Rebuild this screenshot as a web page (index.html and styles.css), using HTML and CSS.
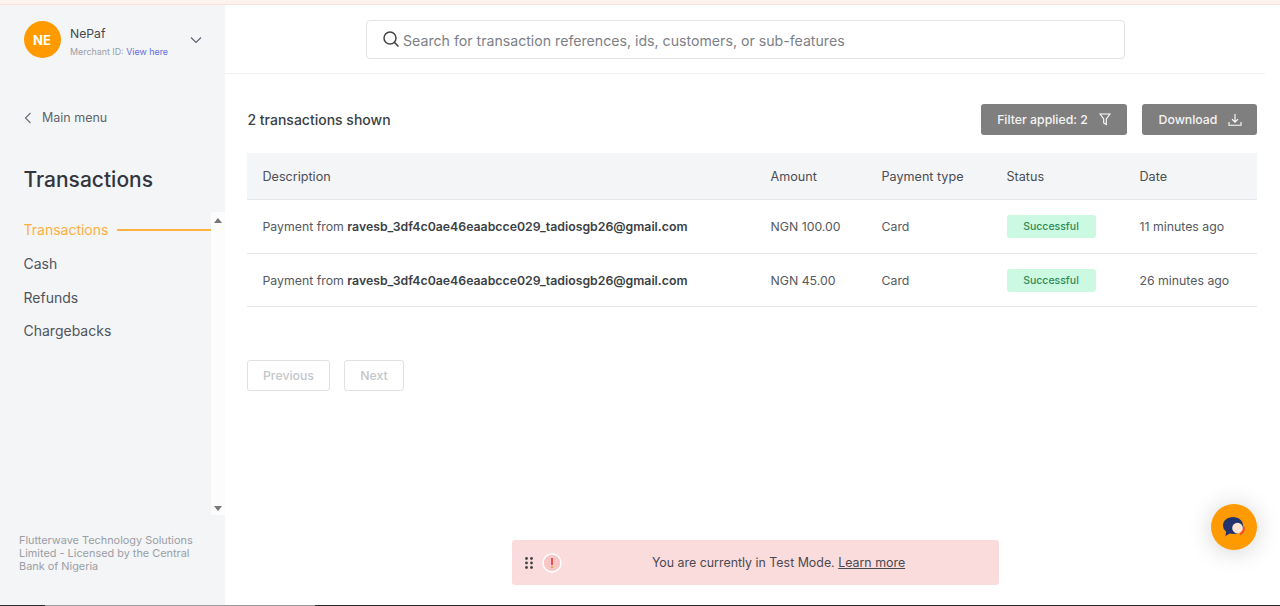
FILE: index.html
```html
<!DOCTYPE html>
<html lang="en">
<head>
<meta charset="utf-8">
<title>Transactions</title>
<link rel="stylesheet" href="styles.css">
</head>
<body>
<div class="topstrip"></div>
<div class="app">
  <aside class="sidebar">
    <div class="account">
      <div class="avatar">NE</div>
      <div class="account-text">
        <div class="account-name">NePaf</div>
        <div class="account-id">Merchant ID: <a class="link">View here</a></div>
      </div>
      <svg class="chev" width="12" height="8" viewBox="0 0 12 8"><path d="M1 1.5l5 5 5-5" fill="none" stroke="#5f6670" stroke-width="1.2"/></svg>
    </div>
    <div class="back">
      <svg width="8" height="12" viewBox="0 0 8 12"><path d="M6.5 1L1.5 6l5 5" fill="none" stroke="#6b7178" stroke-width="1.2"/></svg>
      <span>Main menu</span>
    </div>
    <h1 class="section-title">Transactions</h1>
    <div class="navwrap">
      <nav class="nav">
        <a class="nav-item active"><span>Transactions</span><i class="nav-line"></i></a>
        <a class="nav-item">Cash</a>
        <a class="nav-item">Refunds</a>
        <a class="nav-item">Chargebacks</a>
      </nav>
      <div class="scrollbar">
        <i class="arrow up"></i>
        <i class="arrow down"></i>
      </div>
    </div>
    <p class="legal">Flutterwave Technology Solutions Limited - Licensed by the Central Bank of Nigeria</p>
  </aside>
  <main class="main">
    <header class="searchbar">
      <div class="search">
        <svg width="18" height="18" viewBox="0 0 18 18"><circle cx="8" cy="8" r="6" fill="none" stroke="#444" stroke-width="1.5"/><path d="M12.4 12.4L16.5 16.5" stroke="#444" stroke-width="1.5"/></svg>
        <span>Search for transaction references, ids, customers, or sub-features</span>
      </div>
    </header>
    <section class="content">
      <div class="toolbar">
        <div class="count">2 transactions shown</div>
        <div class="actions">
          <button class="btn btn-filter">Filter applied: 2
            <svg width="12" height="13" viewBox="0 0 12 13"><path d="M1 1h10L7.300 6v5.500L4.700 10V6z" fill="none" stroke="#fff" stroke-width="1.1"/></svg>
          </button>
          <button class="btn btn-download">Download
            <svg width="14" height="14" viewBox="0 0 14 14"><path d="M7 1v8M4 6.200L7 9.200l3-3M1 9v3.200h12V9" fill="none" stroke="#fff" stroke-width="1.1"/></svg>
          </button>
        </div>
      </div>
      <table class="table">
        <colgroup><col class="c1"><col class="c2"><col class="c3"><col class="c4"><col class="c5"></colgroup>
        <thead>
          <tr><th>Description</th><th>Amount</th><th>Payment type</th><th>Status</th><th>Date</th></tr>
        </thead>
        <tbody>
          <tr>
            <td>Payment from <b>ravesb_3df4c0ae46eaabcce029_tadiosgb26@gmail.com</b></td>
            <td>NGN 100.00</td><td>Card</td><td><span class="badge">Successful</span></td><td>11 minutes ago</td>
          </tr>
          <tr>
            <td>Payment from <b>ravesb_3df4c0ae46eaabcce029_tadiosgb26@gmail.com</b></td>
            <td>NGN 45.00</td><td>Card</td><td><span class="badge">Successful</span></td><td>26 minutes ago</td>
          </tr>
        </tbody>
      </table>
      <div class="pager">
        <button class="page-btn btn-prev">Previous</button>
        <button class="page-btn btn-next">Next</button>
      </div>
    </section>
  </main>
</div>
<div class="bottomline"></div>
<div class="toast">
  <svg class="grip" width="8" height="12" viewBox="0 0 8 12"><g fill="#444"><circle cx="1.5" cy="1.5" r="1.4"/><circle cx="6.5" cy="1.5" r="1.4"/><circle cx="1.5" cy="6" r="1.4"/><circle cx="6.5" cy="6" r="1.4"/><circle cx="1.5" cy="10.5" r="1.4"/><circle cx="6.5" cy="10.5" r="1.4"/></g></svg>
  <svg class="alert" width="20" height="20" viewBox="0 0 20 20"><circle cx="10" cy="10" r="9" fill="#f9c6c8" stroke="#fff" stroke-width="1.4"/><rect x="9.200" y="5" width="1.600" height="7" fill="#e5343a"/><rect x="9.200" y="13" width="1.600" height="2" fill="#e0a030"/></svg>
  <div class="toast-text">You are currently in Test Mode. <a class="toast-link">Learn more</a></div>
</div>
<div class="chat">
  <svg width="23" height="20" viewBox="0 0 23 20"><path d="M16 8c2.500 0 6 .5 6 3.500 0 3-2.500 6-5.500 7.500 1-2 1-4-.5-6z" fill="#f0532a"/><path d="M10 0c5.500 0 10 3.500 10 8.500S15.500 17 10 17c-1.200 0-2.300-.2-3.300-.5L2.500 19l.6-4.500C1.200 13 0 11 0 8.500 0 3.500 4.500 0 10 0z" fill="#22346e"/><circle cx="14.500" cy="11" r="5.300" fill="#fde5d5"/></svg>
</div>
</body>
</html>
```

FILE: styles.css
```css
* { box-sizing: border-box; }
html, body { margin: 0; height: 100%; }
body {
  width: 1280px;
  height: 606px;
  overflow: hidden;
  position: relative;
  display: flex;
  flex-direction: column;
  background: #fff;
  font-family: "Inter", "Liberation Sans", sans-serif;
  color: #3d4148;
}
.topstrip { height: 5px; flex: none; background: #fdf2ee; border-bottom: 1px solid #fbe3dc; }
.bottomline {
  height: 1px; flex: none;
  background: linear-gradient(to right, #2b2b2b 0 45px, #9a9a9a 45px 315px, #2b2b2b 315px);
}
.app { flex: 1; display: flex; min-height: 0; }

.sidebar {
  width: 225px; flex: none;
  background: #f4f5f7;
  display: flex; flex-direction: column;
}
.account { display: flex; align-items: center; padding: 16px 23px 0 23.5px; height: 53px; }
.avatar {
  width: 37px; height: 37px; border-radius: 50%;
  background: #ff9b00; color: #fff;
  font-size: 13px; font-weight: 700;
  display: flex; align-items: center; justify-content: center;
  flex: none;
}
.account-text { margin: 5px 0 0 9.5px; flex: 1; }
.account-name { font-size: 12.2px; line-height: 16px; color: #44484f; }
.account-id { font-size: 8.9px; line-height: 13px; margin-top: 3px; color: #9a9ea5; white-space: nowrap; }
.link { color: #5f6fe0; }
.chev { flex: none; }
.back {
  display: flex; align-items: center; gap: 10.5px;
  margin-top: 52px; padding-left: 23.5px;
  font-size: 12.5px; line-height: 16px; color: #5f656d;
}
.section-title {
  margin: 40px 0 0 23.5px;
  font-size: 21px; line-height: 28px; font-weight: 500; color: #33363d;
}
.navwrap { display: flex; flex: 1; margin-top: 18px; min-height: 0; }
.nav { flex: 1; padding-top: 1px; }
.nav-item {
  display: flex; align-items: center; gap: 9px;
  height: 33.7px; padding-left: 23.5px;
  font-size: 14px; color: #4f545c;
}
.nav-item.active { color: #ffae3d; }
.nav-line { flex: 1; height: 1.5px; background: #ffb23f; }
.scrollbar {
  width: 14px; flex: none;
  background: #fcfcfd;
  position: relative;
}
.arrow { position: absolute; left: 3px; width: 0; height: 0; border-left: 4.5px solid transparent; border-right: 4.5px solid transparent; }
.arrow.up { top: 6px; border-bottom: 5px solid #777; }
.arrow.down { bottom: 4px; border-top: 5px solid #777; }
.legal {
  margin: 19px 30px 32px 19px;
  font-size: 10.9px; line-height: 13px; color: #9a9ea5;
}

.main { flex: 1; min-width: 0; display: flex; flex-direction: column; }
.searchbar {
  height: 69px; flex: none;
  margin-right: 15px;
  border-bottom: 1px solid #f0f1f3;
  padding: 15px 140px 0 141px;
}
.search {
  height: 39px; display: flex; align-items: center; gap: 3px;
  padding: 2px 0 0 15px;
  border: 1px solid #e1e3e6; border-radius: 4px;
  font-size: 14.15px; color: #7d8187;
}
.search svg { margin-top: -3px; }
.content { padding: 0 23px 0 22px; }
.toolbar { display: flex; align-items: center; justify-content: space-between; height: 79px; padding-top: 12px; }
.count { margin-left: .5px; font-size: 14px; font-weight: 500; color: #3b3f46; }
.actions { display: flex; gap: 15px; }
.btn {
  height: 31px;
  display: flex; align-items: center; justify-content: center; gap: 11px;
  background: #7f7f7f; color: #f4f4f4;
  border: 0; border-radius: 3px;
  font: 500 12.3px "Inter", "Liberation Sans", sans-serif;
}
.btn-filter { width: 146px; }
.btn-download { width: 115px; padding: 0 5px 0 7px; }
.table { width: 1010px; border-collapse: collapse; table-layout: fixed; font-size: 12.3px; }
.c1 { width: 508px; }
.c2 { width: 111px; }
.c3 { width: 125px; }
.c4 { width: 133px; }
th {
  height: 46px; padding: 1px 0 0 15.5px;
  text-align: left; font-weight: 400; font-size: 12.6px; color: #4a4e55;
  background: #f4f5f7;
}
td {
  height: 54px; padding: 0 0 0 15.5px;
  border-top: 1px solid #e6e7ea;
  color: #555a61; white-space: nowrap;
}
tbody tr:last-child td { border-bottom: 1px solid #e6e7ea; height: 53px; padding-top: 1px; }
td b { font-size: 12.3px; font-weight: 600; color: #3b3f46; }
.badge {
  display: inline-block; width: 89px; height: 23px;
  line-height: 23px; text-align: center;
  background: #ccf9e2; color: #2f8a58;
  font-size: 10.5px; font-weight: 500; border-radius: 3px;
}
.pager { display: flex; gap: 14px; margin-top: 53px; }
.page-btn {
  height: 31px;
  background: #fff; color: #c4c7cb;
  border: 1px solid #dfe1e4; border-radius: 3px;
  font: 500 12.3px "Inter", "Liberation Sans", sans-serif;
}
.btn-prev { width: 83px; }
.btn-next { width: 60px; }

.toast {
  position: absolute; left: 512px; top: 540px;
  width: 487px; height: 45px;
  display: flex; align-items: center;
  padding-left: 13px;
  background: #fbdcdd; border-radius: 3px;
  font-size: 12.4px; color: #4a4a4f;
}
.grip { flex: none; }
.alert { flex: none; margin-left: 9px; }
.toast-text { flex: 1; text-align: center; padding: 0 4px 1px 0; }
.toast-link { text-decoration: underline; }
.chat {
  position: absolute; left: 1211px; top: 504px;
  width: 46px; height: 46px; border-radius: 50%;
  background: #ff9b00;
  box-shadow: 0 2px 24px rgba(0,0,0,.18);
  display: flex; align-items: center; justify-content: center;
}
```
